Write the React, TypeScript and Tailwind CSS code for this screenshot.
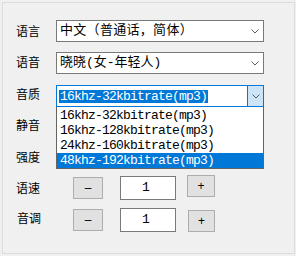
import React from 'react';

const Chevron = () => (
  <svg width="8" height="5" viewBox="0 0 8 5">
    <path d="M0.5 0.5 L4 4 L7.5 0.5" fill="none" stroke="#606060" strokeWidth="1" />
  </svg>
);

const qualities = [
  '16khz-32kbitrate(mp3)',
  '16khz-128kbitrate(mp3)',
  '24khz-160kbitrate(mp3)',
  '48khz-192kbitrate(mp3)',
];

interface ComboProps {
  children: React.ReactNode;
  focused?: boolean;
}

const Combo: React.FC<ComboProps> = ({ children, focused }) => (
  <div
    className={`relative flex h-[22px] w-[208px] items-center border bg-white ${
      focused ? 'border-[#0078d7]' : 'border-[#7a7a7a]'
    }`}
  >
    <div className="flex h-full flex-1 items-center overflow-hidden pl-[2px]">{children}</div>
    <div
      className={`flex h-full w-[16px] items-center justify-center ${
        focused ? 'border-l border-[#0078d7] bg-[#cce4f7]' : ''
      }`}
    >
      <Chevron />
    </div>
  </div>
);

const Label: React.FC<{ text: string; className?: string }> = ({ text, className = '' }) => (
  <div className={`w-[40px] shrink-0 text-[12px] leading-[14px] ${className}`}>{text}</div>
);

export default function App() {
  return (
    <div className="h-[256px] w-[296px] bg-[#f0f0f0] pl-[2px] pt-[2px] font-['Noto_Sans_CJK_SC',sans-serif] text-black">
      <div className="flex h-[252px] w-[293px] flex-col border border-[#dcdcdc] pl-[13px]">
        {/* 语言 */}
        <div className="mt-[17px] flex h-[22px] items-center">
          <Label text="语言" />
          <Combo>
            <span className="ml-[1px] font-['Liberation_Mono','Noto_Sans_CJK_SC',monospace] text-[13px] leading-[16px] tracking-[0.3px]">
              中文（普通话，简体）
            </span>
          </Combo>
        </div>

        {/* 语音 */}
        <div className="mt-[10px] flex h-[22px] items-center">
          <Label text="语音" className="mb-[3px]" />
          <Combo>
            <span className="ml-[1px] font-['Liberation_Mono','Noto_Sans_CJK_SC',monospace] text-[13px] leading-[16px]">
              晓晓(女-年轻人)
            </span>
          </Combo>
        </div>

        {/* 音质 */}
        <div className="mt-[11px] flex h-[22px] items-center">
          <Label text="音质" className="mb-[4px]" />
          <div className="relative">
            <Combo focused>
              <span className="bg-[#0078d7] px-[1px] font-['Liberation_Mono',monospace] text-[13px] leading-[13px] tracking-[-0.8px] text-white">
                {qualities[0]}
              </span>
            </Combo>
            {/* dropdown list */}
            <div className="absolute left-0 top-[22px] z-10 w-[208px] border-x border-b border-[#646464] bg-white pt-[1px]">
              {qualities.map((q, i) => (
                <div
                  key={q}
                  className={`flex h-[15px] items-center pl-[3px] font-['Liberation_Mono',monospace] text-[13px] leading-[15px] tracking-[-0.8px] ${
                    i === 3 ? 'bg-[#0078d7] text-white' : ''
                  }`}
                >
                  {q}
                </div>
              ))}
            </div>
          </div>
        </div>

        {/* 静音 */}
        <div className="mt-[7px] flex h-[22px] items-center">
          <Label text="静音" />
        </div>

        {/* 强度 */}
        <div className="mt-[10px] flex h-[22px] items-center">
          <Label text="强度" />
        </div>

        {/* 语速 */}
        <div className="mt-[7px] flex h-[25px] items-start">
          <Label text="语速" className="mr-[17px] self-center" />
          <button className="mt-[2px] flex h-[22px] w-[30px] items-center justify-center border border-[#adadad] bg-[#e1e1e1] font-['Liberation_Sans',sans-serif] text-[12px]">
            –
          </button>
          <div className="ml-[17px] mt-[1px] flex h-[24px] w-[56px] items-center justify-center border border-[#7a7a7a] bg-white pr-[4px] font-['Liberation_Mono',monospace] text-[13px]">
            1
          </div>
          <button className="ml-[11px] flex h-[22px] w-[28px] items-center justify-center border border-[#adadad] bg-[#e1e1e1] font-['Liberation_Sans',sans-serif] text-[12px]">
            +
          </button>
        </div>

        {/* 音调 */}
        <div className="mt-[8px] flex h-[24px] items-start">
          <Label text="音调" className="mb-[4px] ml-[1px] mr-[16px] self-center" />
          <button className="mt-[1px] flex h-[22px] w-[30px] items-center justify-center border border-[#adadad] bg-[#e1e1e1] font-['Liberation_Sans',sans-serif] text-[12px]">
            –
          </button>
          <div className="ml-[17px] flex h-[24px] w-[56px] items-center justify-center border border-[#7a7a7a] bg-white pr-[4px] font-['Liberation_Mono',monospace] text-[13px]">
            1
          </div>
          <button className="ml-[12px] mt-[2px] flex h-[22px] w-[27px] items-center justify-center border border-[#adadad] bg-[#e1e1e1] font-['Liberation_Sans',sans-serif] text-[12px]">
            +
          </button>
        </div>
      </div>
    </div>
  );
}
